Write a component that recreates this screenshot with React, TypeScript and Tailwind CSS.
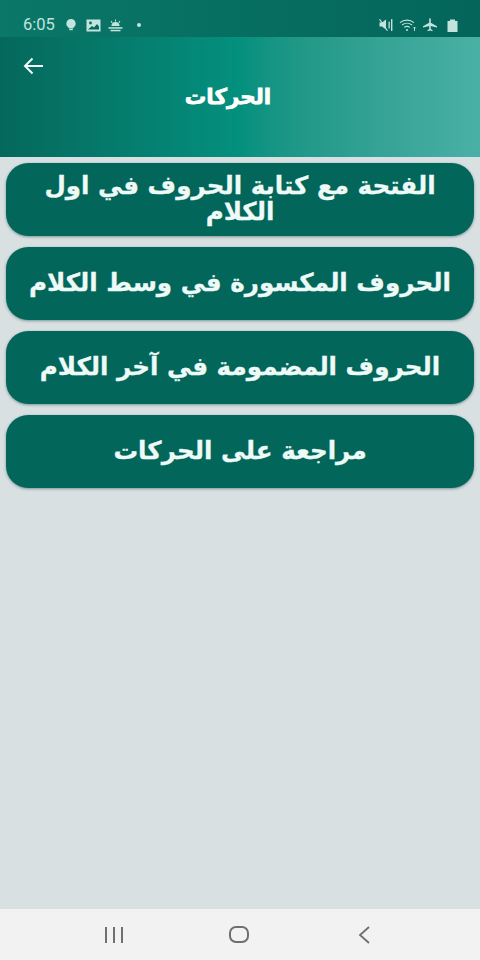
export default function App() {
  const items = [
    "الفتحة مع كتابة الحروف في اول الكلام",
    "الحروف المكسورة في وسط الكلام",
    "الحروف المضمومة في آخر الكلام",
    "مراجعة على الحركات",
  ];
  return (
    <div className="flex h-[960px] w-[480px] flex-col overflow-hidden bg-[#d9e0e2] font-['DejaVu_Sans',sans-serif]">
      <div className="flex h-[37px] shrink-0 items-center justify-between bg-gradient-to-r from-[#0a7768] to-[#04665a] pl-[23px] pr-[22px] pt-[13px] text-[#c3e4de]">
        <div className="flex items-center">
          <span className="font-['Roboto',sans-serif] text-[16.5px] leading-none">6:05</span>
          <svg className="ml-[10px]" width="12" height="14" viewBox="0 0 12 14" fill="currentColor">
            <path d="M6 1a4.6 4.6 0 0 1 2.6 8.4L8 10.5H4l-.6-1.1A4.6 4.6 0 0 1 6 1z" />
            <rect x="4.2" y="11" width="3.6" height="1.2" />
          </svg>
          <svg className="ml-[9px]" width="15" height="13" viewBox="0 0 15 13">
            <rect x="0.5" y="0.5" width="14" height="12" fill="currentColor" />
            <circle cx="4.5" cy="4" r="1.4" fill="#04685b" />
            <path d="M2 10.5 6 7l2 1.6L11 5l2 2.5v3z" fill="#04685b" />
          </svg>
          <svg className="ml-[7px]" width="15" height="13" viewBox="0 0 15 13" fill="currentColor">
            <path d="M3.5 7a4 4 0 0 1 8 0z" />
            <rect x="0.5" y="8.2" width="14" height="1.5" />
            <rect x="2.5" y="10.8" width="10" height="1.5" />
            <rect x="7" y="0.5" width="1" height="2" />
            <path d="m2.6 2.4 1-.6 1 1.7-.9.5zM12.4 2.4l-1-.6-1 1.7.9.5z" />
          </svg>
          <span className="ml-[14px] h-[4px] w-[4px] rounded-full bg-current" />
        </div>
        <div className="flex items-center">
          <svg width="15" height="14" viewBox="0 0 15 14" fill="currentColor">
            <path d="M0.5 4.5h2.5L7 1.5v10l-4-3H0.5z" />
            <path d="m1 1 8 11.5-1 .6L0 1.6z" />
            <rect x="12" y="1" width="1.4" height="12" rx=".6" />
            <rect x="9.5" y="3.5" width="1.3" height="7" rx=".6" />
          </svg>
          <svg className="ml-[5px]" width="18" height="14" viewBox="0 0 18 14" fill="none" stroke="currentColor" strokeWidth="1.1">
            <path d="M1 4.6a11 11 0 0 1 14 0" />
            <path d="M3 7a8 8 0 0 1 10 0" />
            <path d="M5.2 9.4a4.6 4.6 0 0 1 5.6 0" />
            <circle cx="8" cy="12" r="1" fill="currentColor" stroke="none" />
            <path d="M15.5 9v4M14.3 10.3l1.2-1.3 1.2 1.3" strokeWidth="0.9" />
          </svg>
          <svg className="ml-[5px]" width="16" height="14" viewBox="0 0 16 14" fill="currentColor">
            <path d="M7.2.8c0-.9 1.6-.9 1.6 0v3.9l6.2 3.5v1.4L8.8 7.9v3l1.7 1.3v1L8 12.6l-2.5.6v-1l1.7-1.3v-3L1 9.6V8.2l6.2-3.5z" />
          </svg>
          <svg className="ml-[9px]" width="11" height="13" viewBox="0 0 11 13" fill="currentColor">
            <path d="M3 .5h5V2h2.5v11H.5V2H3z" />
          </svg>
        </div>
      </div>

      <div className="relative flex h-[120px] shrink-0 items-center justify-center bg-gradient-to-r from-[#05685c] from-0% via-[#04907e] via-50% to-[#4ab0a6] to-100% pr-[24px]">
        <svg className="absolute left-[23px] top-[20px]" width="20" height="18" viewBox="0 0 20 18" fill="none" stroke="#f2fbf9" strokeWidth="2">
          <path d="M20 9H2M9.5 1.5 2 9l7.5 7.5" />
        </svg>
        <h1 dir="rtl" className="text-[21.5px] font-bold leading-none text-white [-webkit-text-stroke:0.8px_#ffffff]">الحركات</h1>
      </div>

      <div className="flex flex-col gap-[11px] px-[6px] pt-[6px]">
        {items.map((t) => (
          <button
            key={t}
            dir="rtl"
            className="flex h-[73px] items-center justify-center rounded-[22px] bg-[#03665a] px-5 pb-[1px] text-center text-[24.6px] font-bold leading-[26px] text-[#eefaf7] shadow-[0_1px_3px_rgba(0,60,50,0.45)] [-webkit-text-stroke:0.3px_#eefaf7]"
          >
            {t}
          </button>
        ))}
      </div>

      <div className="mt-auto flex h-[51px] shrink-0 items-center bg-[#f2f2f2] pl-[105px] text-[#6f6f6f]">
        <svg width="18" height="16" viewBox="0 0 18 16" fill="currentColor">
          <rect x="0" y="0" width="2" height="16" />
          <rect x="8" y="0" width="2" height="16" />
          <rect x="16" y="0" width="2" height="16" />
        </svg>
        <svg className="ml-[106px]" width="20" height="17" viewBox="0 0 20 17" fill="none" stroke="currentColor" strokeWidth="2">
          <rect x="1" y="1" width="18" height="15" rx="6" />
        </svg>
        <svg className="ml-[109px]" width="12" height="18" viewBox="0 0 12 18" fill="none" stroke="currentColor" strokeWidth="1.8">
          <path d="M11 1 2 9l9 8" />
        </svg>
      </div>
    </div>
  );
}
